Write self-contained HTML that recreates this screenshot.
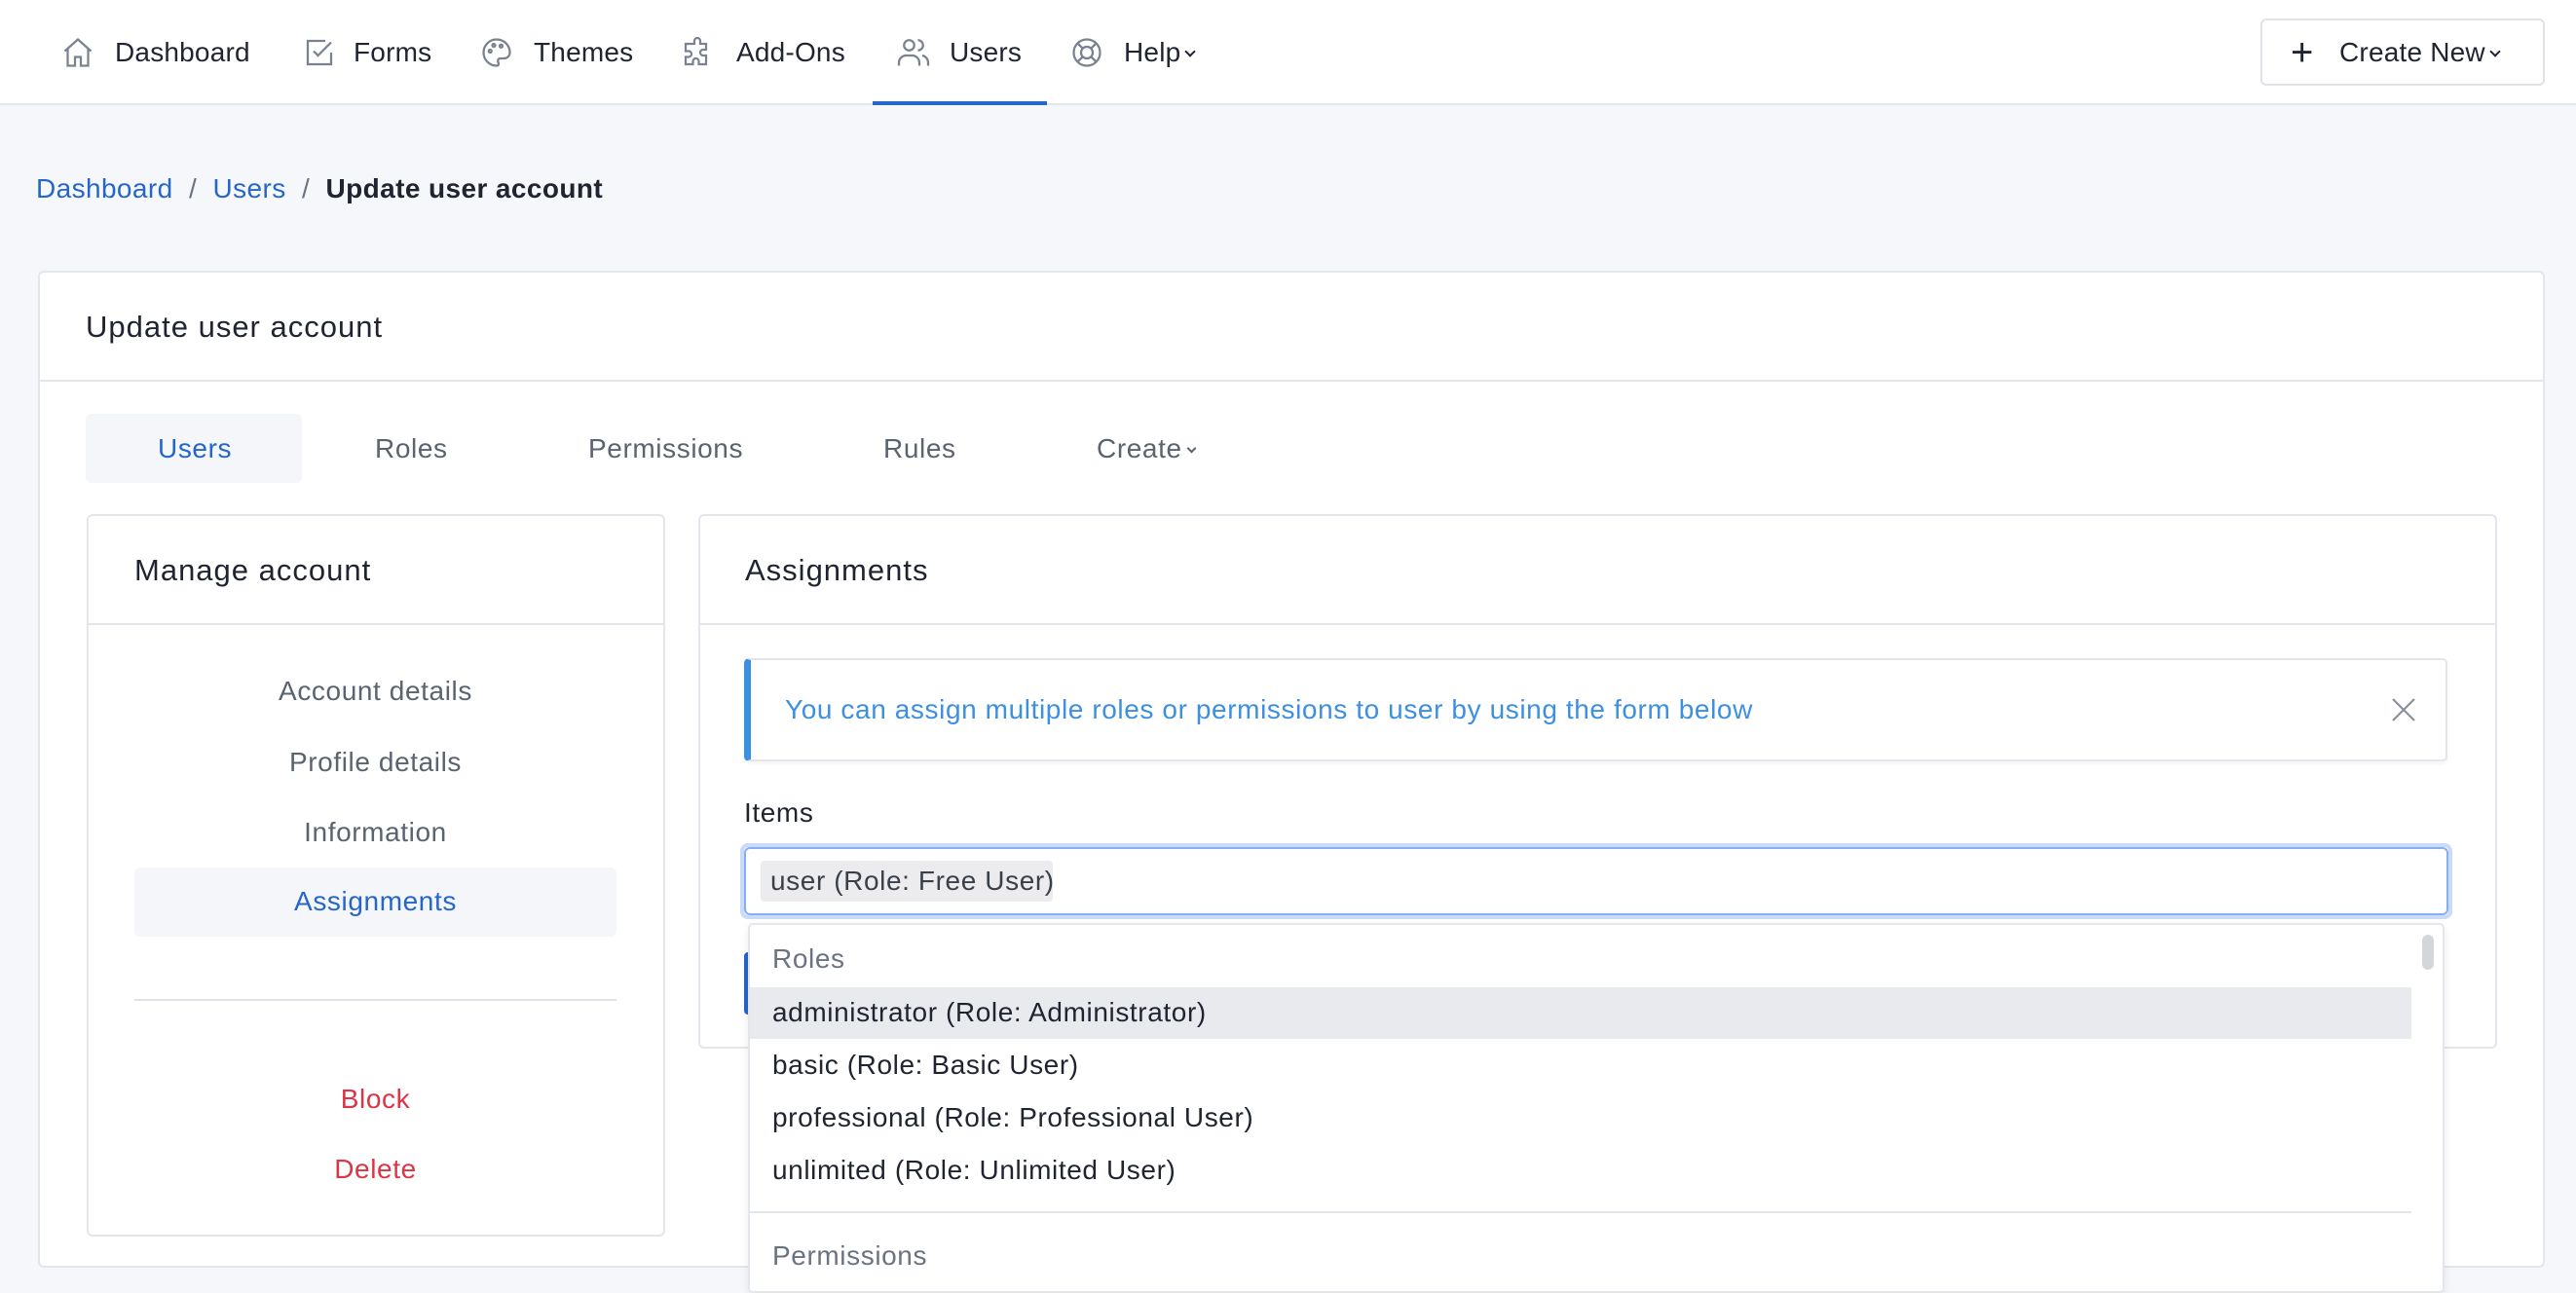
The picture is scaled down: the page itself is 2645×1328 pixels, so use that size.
<!DOCTYPE html>
<html><head><meta charset="utf-8"><style>
*{box-sizing:border-box;margin:0;padding:0}
body{width:2645px;height:1313px;overflow:hidden;background:#f6f7fa;font-family:"Liberation Sans",sans-serif;color:#1f2430;position:relative}
.a{position:absolute;white-space:nowrap}
.nav{position:absolute;left:0;top:0;width:2645px;height:108px;background:#fff;border-bottom:2px solid #e3e6ea}
.ni{position:absolute;top:34px;font-size:28px;color:#1f2430;line-height:40px;letter-spacing:.2px}
.ic{position:absolute;top:36px;width:36px;height:36px}
.card{position:absolute;background:#fff;border:2px solid #e3e6ea;border-radius:6px}
.t27{font-size:28px;line-height:36px;letter-spacing:.6px}
.ttl{font-size:31px;line-height:40px;letter-spacing:1px}
.mi{position:absolute;left:138px;width:495px;text-align:center;font-size:28px;color:#5b6370;line-height:36px;letter-spacing:.6px}
.chev{display:inline-block;width:10px;height:10px;border-right:2px solid currentColor;border-bottom:2px solid currentColor;transform:rotate(45deg);position:relative;top:-6px;margin-left:6px}
</style></head><body>
<div class="nav">
<svg class="ic" style="left:62px" viewBox="0 0 24 24" fill="none" stroke="#7a8290" stroke-width="1.5"><path d="M3 11l9-8 9 8M5 9.5V21h5v-6h4v6h5V9.5"/></svg>
<div class="ni" style="left:118px">Dashboard</div>
<svg class="ic" style="left:310px" viewBox="0 0 24 24" fill="none" stroke="#7a8290" stroke-width="1.5"><path d="M20 12v8H4V4h12"/><path d="M8 11l3 3 9-9"/></svg>
<div class="ni" style="left:363px">Forms</div>
<svg class="ic" style="left:492px" viewBox="0 0 24 24" fill="none" stroke="#7a8290" stroke-width="1.5"><path d="M12 3a9 9 0 100 18c1.5 0 1.5-1.5 1-2.5s0-2.5 1.5-2.5H17a4 4 0 004-4c0-5-4-9-9-9z"/><circle cx="7.5" cy="11" r="1"/><circle cx="10" cy="7" r="1"/><circle cx="15" cy="7.5" r="1"/></svg>
<div class="ni" style="left:548px">Themes</div>
<svg class="ic" style="left:698px" viewBox="0 0 24 24" fill="none" stroke="#7a8290" stroke-width="1.5"><path d="M10 4a2 2 0 014 0v2h4v4h-2a2 2 0 000 4h2v6h-5v-2a2 2 0 00-4 0v2H4v-5h2a2 2 0 000-4H4V6h6z"/></svg>
<div class="ni" style="left:756px">Add-Ons</div>
<svg class="ic" style="left:920px" viewBox="0 0 24 24" fill="none" stroke="#7a8290" stroke-width="1.5"><circle cx="9" cy="7" r="3.5"/><path d="M2 21v-2a5 5 0 015-5h4a5 5 0 015 5v2M15 3.5a3.5 3.5 0 010 7M18 14a5 5 0 014 5v2"/></svg>
<div class="ni" style="left:975px">Users</div>
<div class="a" style="left:896px;top:104px;width:179px;height:4px;background:#2566c8"></div>
<svg class="ic" style="left:1098px" viewBox="0 0 24 24" fill="none" stroke="#7a8290" stroke-width="1.5"><circle cx="12" cy="12" r="9"/><circle cx="12" cy="12" r="4"/><path d="M5.6 5.6l3.6 3.6M14.8 14.8l3.6 3.6M18.4 5.6l-3.6 3.6M9.2 14.8l-3.6 3.6"/></svg>
<div class="ni" style="left:1154px">Help<span class="chev" style="width:8px;height:8px"></span></div>
<div class="a" style="left:2321px;top:19px;width:292px;height:69px;border:2px solid #dfe2e6;border-radius:6px;background:#fff"></div>
<div class="a" style="left:2352px;top:34px;font-size:40px;line-height:40px;color:#1f2430;font-weight:300">+</div>
<div class="ni" style="left:2402px;top:34px">Create New<span class="chev" style="width:8px;height:8px"></span></div>
</div>

<div class="a" style="left:37px;top:176px;font-size:28px;line-height:36px;letter-spacing:.4px;color:#2566c8">Dashboard <span style="color:#6b7280">&nbsp;/&nbsp;</span> Users <span style="color:#6b7280">&nbsp;/&nbsp;</span> <b style="color:#1f2430">Update user account</b></div>

<div class="card" style="left:39px;top:278px;width:2574px;height:1024px"></div>
<div class="a ttl" style="left:88px;top:316px">Update user account</div>
<div class="a" style="left:41px;top:390px;width:2570px;height:2px;background:#e3e6ea"></div>

<div class="a" style="left:88px;top:425px;width:222px;height:71px;background:#f4f6fa;border-radius:6px"></div>
<div class="a t27" style="left:162px;top:443px;color:#2566c8">Users</div>
<div class="a t27" style="left:385px;top:443px;color:#5b6370">Roles</div>
<div class="a t27" style="left:604px;top:443px;color:#5b6370">Permissions</div>
<div class="a t27" style="left:907px;top:443px;color:#5b6370">Rules</div>
<div class="a t27" style="left:1126px;top:443px;color:#5b6370">Create<span class="chev" style="width:7px;height:7px"></span></div>

<div class="card" style="left:89px;top:528px;width:594px;height:742px"></div>
<div class="a ttl" style="left:138px;top:566px">Manage account</div>
<div class="a" style="left:91px;top:640px;width:590px;height:2px;background:#e3e6ea"></div>
<div class="mi" style="top:692px">Account details</div>
<div class="mi" style="top:765px">Profile details</div>
<div class="mi" style="top:837px">Information</div>
<div class="a" style="left:138px;top:891px;width:495px;height:71px;background:#f4f6fa;border-radius:6px"></div>
<div class="mi" style="top:908px;color:#2566c8">Assignments</div>
<div class="a" style="left:138px;top:1026px;width:495px;height:2px;background:#dfe2e6"></div>
<div class="mi" style="top:1111px;color:#dc3545">Block</div>
<div class="mi" style="top:1183px;color:#dc3545">Delete</div>

<div class="card" style="left:717px;top:528px;width:1847px;height:549px"></div>
<div class="a ttl" style="left:765px;top:566px">Assignments</div>
<div class="a" style="left:719px;top:640px;width:1843px;height:2px;background:#e3e6ea"></div>

<div class="a" style="left:764px;top:676px;width:1749px;height:106px;background:#fff;border:2px solid #e3e6ea;border-left:7px solid #3d8fe0;border-radius:5px;box-shadow:0 2px 4px rgba(0,0,0,.05)"></div>
<div class="a t27" style="left:806px;top:711px;color:#3d8fe0">You can assign multiple roles or permissions to user by using the form below</div>
<svg class="a" style="left:2455px;top:716px" width="26" height="26" viewBox="0 0 26 26" stroke="#8a919c" stroke-width="2.2"><path d="M2 2l22 22M24 2L2 24"/></svg>

<div class="a t27" style="left:764px;top:817px;color:#1f2430">Items</div>
<div class="a" style="left:760px;top:866px;width:1758px;height:78px;border:4px solid #c9dafa;border-radius:8px"></div>
<div class="a" style="left:764px;top:870px;width:1750px;height:70px;border:2px solid #86aef0;border-radius:6px;background:#fff"></div>
<div class="a" style="left:781px;top:884px;width:300px;height:42px;background:#ececee;border-radius:4px"></div>
<div class="a t27" style="left:791px;top:887px;color:#3a404a">user (Role: Free User)</div>

<div class="a" style="left:764px;top:978px;width:8px;height:64px;background:#2566c8;border-radius:4px 0 0 4px"></div>

<div class="a" style="left:768px;top:948px;width:1742px;height:380px;background:#fff;border:2px solid #e3e6ea;border-radius:5px;box-shadow:0 4px 10px rgba(0,0,0,.08)"></div>
<div class="a" style="left:2487px;top:960px;width:12px;height:36px;background:#d4d6da;border-radius:6px"></div>
<div class="a t27" style="left:793px;top:967px;color:#6b7280">Roles</div>
<div class="a" style="left:770px;top:1014px;width:1706px;height:53px;background:#e9eaed"></div>
<div class="a t27" style="left:793px;top:1022px;color:#1f2430">administrator (Role: Administrator)</div>
<div class="a t27" style="left:793px;top:1076px;color:#1f2430">basic (Role: Basic User)</div>
<div class="a t27" style="left:793px;top:1130px;color:#1f2430">professional (Role: Professional User)</div>
<div class="a t27" style="left:793px;top:1184px;color:#1f2430">unlimited (Role: Unlimited User)</div>
<div class="a" style="left:770px;top:1244px;width:1706px;height:2px;background:#e3e6ea"></div>
<div class="a t27" style="left:793px;top:1272px;color:#6b7280">Permissions</div>
</body></html>
